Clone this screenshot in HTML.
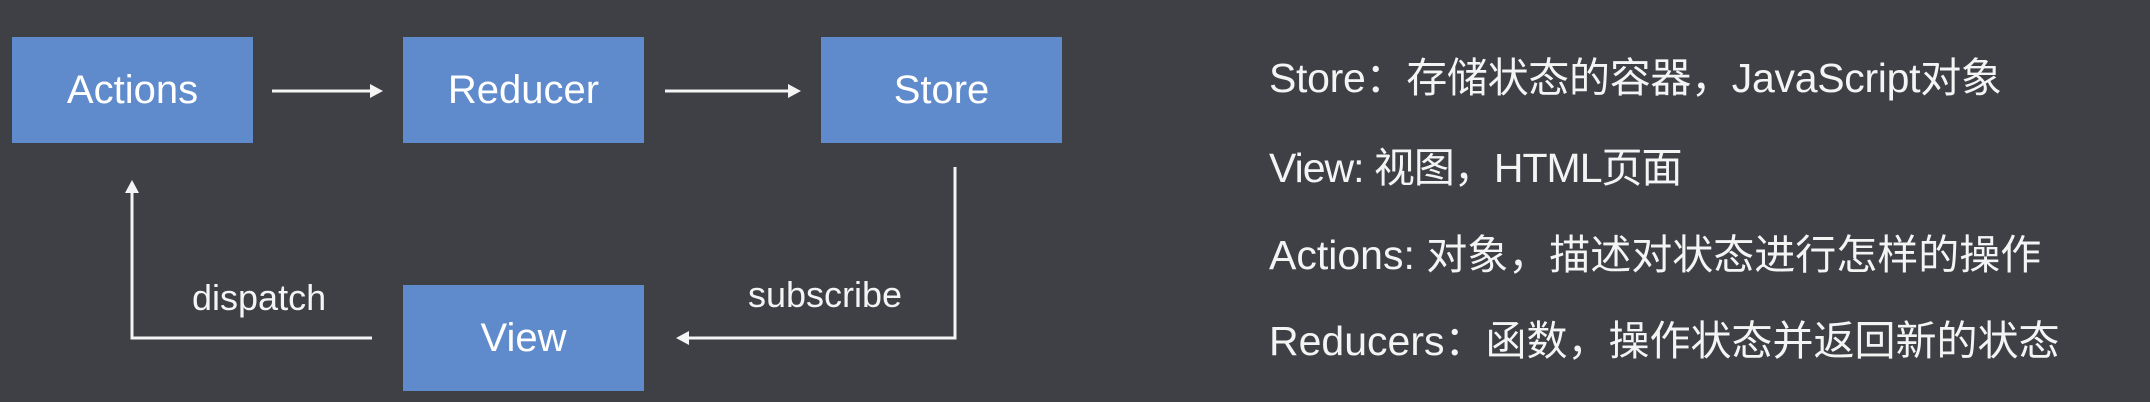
<!DOCTYPE html>
<html><head><meta charset="utf-8"><style>
html,body{margin:0;padding:0;}
body{width:2150px;height:402px;background:#3e4046;position:relative;overflow:hidden;font-family:"Liberation Sans","Noto Sans CJK SC",sans-serif;color:#f4f4f4;}
.b{position:absolute;background:#5f8bcd;width:241px;height:106px;display:flex;align-items:center;justify-content:center;font-size:40px;color:#fff;}
.t{position:absolute;font-size:36px;}
.r{position:absolute;left:1269px;font-size:41px;white-space:nowrap;line-height:1;}
</style></head><body>
<div class="b" style="left:12px;top:37px">Actions</div>
<div class="b" style="left:403px;top:37px">Reducer</div>
<div class="b" style="left:821px;top:37px">Store</div>
<div class="b" style="left:403px;top:285px">View</div>
<svg width="2150" height="402" style="position:absolute;left:0;top:0" fill="none" stroke="#f4f4f4" stroke-width="3">
<line x1="272" y1="91" x2="372" y2="91"/><path d="M370 84 L383 91 L370 98Z" fill="#f4f4f4" stroke="none"/>
<line x1="665" y1="91" x2="790" y2="91"/><path d="M788 84 L801 91 L788 98Z" fill="#f4f4f4" stroke="none"/>
<polyline points="955,167 955,338 687,338"/><path d="M689 331 L676 338 L689 345Z" fill="#f4f4f4" stroke="none"/>
<polyline points="372,338 132,338 132,191"/><path d="M125 193 L132 180 L139 193Z" fill="#f4f4f4" stroke="none"/>
</svg>
<div class="t" style="left:192px;top:277px">dispatch</div>
<div class="t" style="left:748px;top:274px">subscribe</div>
<div class="r" style="top:58px;letter-spacing:-0.3px">Store：存储状态的容器，JavaScript对象</div>
<div class="r" style="top:148px;letter-spacing:-1px">View: 视图，HTML页面</div>
<div class="r" style="top:235px">Actions: 对象，描述对状态进行怎样的操作</div>
<div class="r" style="top:321px">Reducers：函数，操作状态并返回新的状态</div>
</body></html>
